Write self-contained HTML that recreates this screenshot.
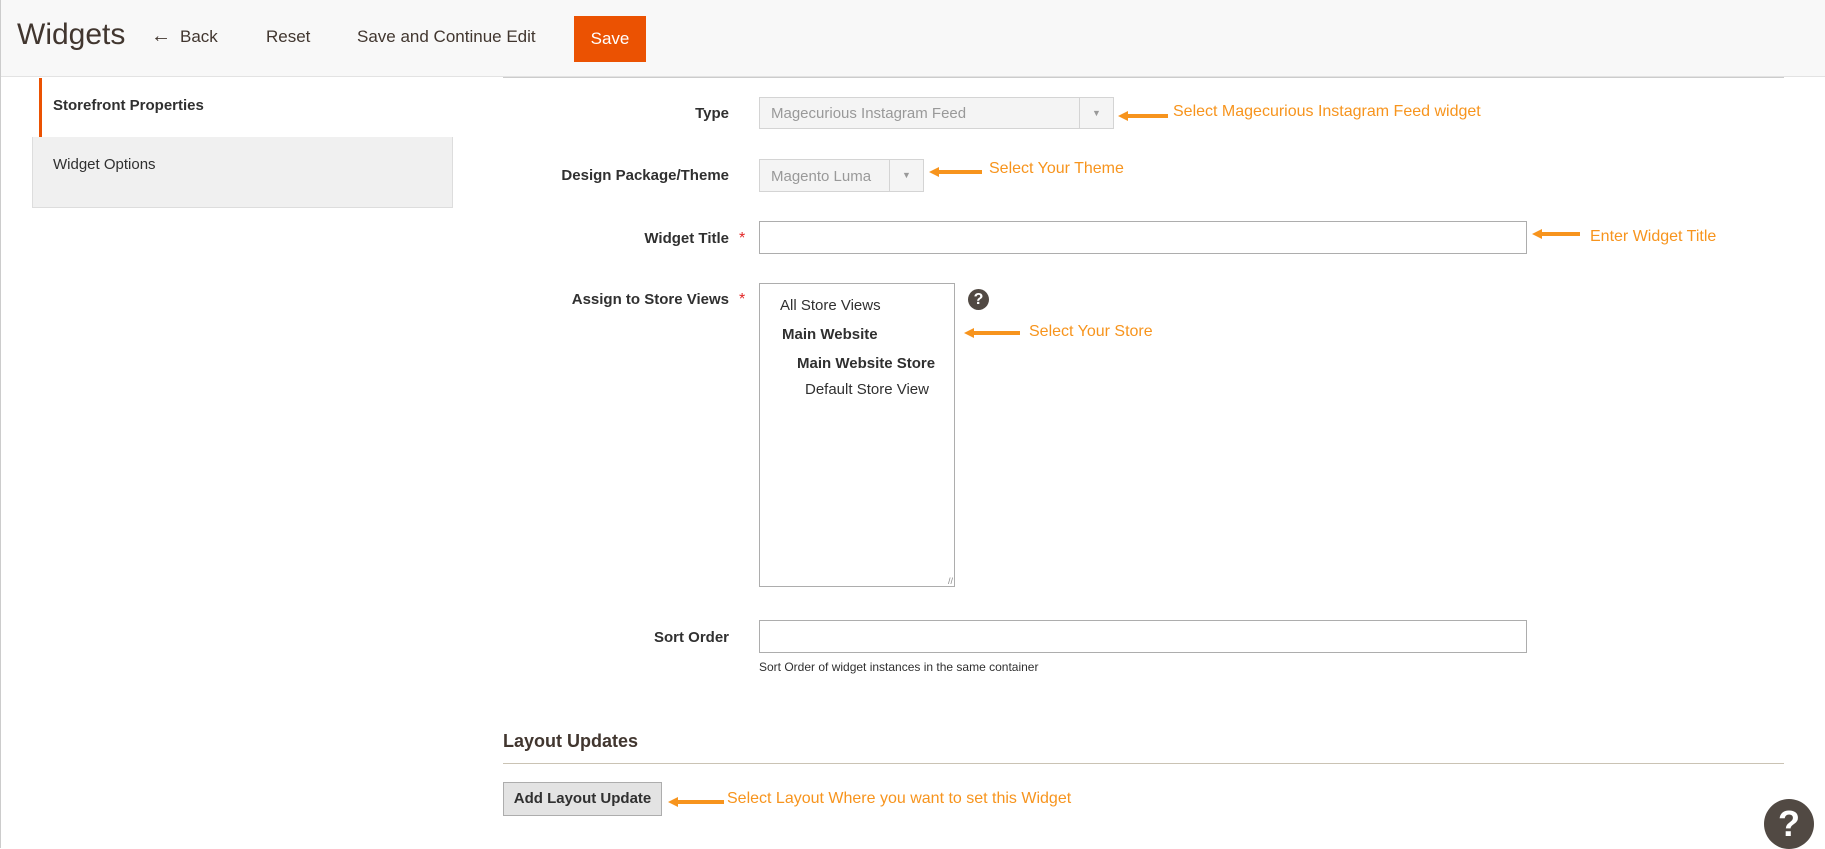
<!DOCTYPE html>
<html><head><meta charset="utf-8"><style>
*{box-sizing:border-box;margin:0;padding:0}
body{width:1825px;height:848px;overflow:hidden;background:#fff;font-family:"Liberation Sans",sans-serif;color:#303030;position:relative;border-left:1px solid #ccc}
.a{position:absolute;white-space:nowrap}
.hdr{left:0;top:0;width:1825px;height:77px;background:#f8f8f8;border-bottom:1px solid #e3e3e3}
.hb{font-size:17px;color:#41362f;top:27px}
.lbl{font-size:15px;font-weight:bold;color:#303030;text-align:right;width:400px}
.inp{border:1px solid #adadad;background:#fff}
.sel{border:1px solid #d4d4d4;background:#f4f4f4;color:#999;font-size:15px}
.or{color:#f7941d;font-size:16px}
.star{color:#e22626;font-size:16px}
</style></head><body>
<div class="a hdr"></div>
<div class="a" style="left:16px;top:18px;font-size:30px;color:#41362f">Widgets</div>
<div class="a hb" style="left:150px;top:25px;font-size:20px">&#8592;</div>
<div class="a hb" style="left:179px">Back</div>
<div class="a hb" style="left:265px">Reset</div>
<div class="a hb" style="left:356px">Save and Continue Edit</div>
<div class="a" style="left:573px;top:16px;width:72px;height:46px;background:#eb5202;color:#fff;font-size:17px;text-align:center;line-height:46px">Save</div>

<div class="a" style="left:38px;top:78px;width:414px;height:59px;border-left:3px solid #eb5202;background:#fff"></div>
<div class="a" style="left:52px;top:97px;font-size:15px;font-weight:bold">Storefront Properties</div>
<div class="a" style="left:31px;top:137px;width:421px;height:71px;background:#f0f0f0;border:1px solid #ddd;border-top:none"></div>
<div class="a" style="left:52px;top:156px;font-size:15px">Widget Options</div>

<div class="a" style="left:502px;top:77px;width:1281px;height:1px;background:#ccc"></div>

<div class="a lbl" style="left:328px;top:105px">Type</div>
<div class="a sel" style="left:758px;top:97px;width:355px;height:32px"><span style="position:absolute;left:11px;top:7px">Magecurious Instagram Feed</span><span style="position:absolute;right:0;top:0;width:34px;height:30px;border-left:1px solid #d4d4d4;font-size:9px;text-align:center;line-height:30px">&#9660;</span></div>
<div class="a" style="left:1117px;top:108px"><svg width="52" height="10"><path d="M0 5 L10 0 L10 3 L50 3 L50 7 L10 7 L10 10Z" fill="#f7941d"/></svg></div>
<div class="a or" style="left:1172px;top:103px">Select Magecurious Instagram Feed widget</div>

<div class="a lbl" style="left:328px;top:167px">Design Package/Theme</div>
<div class="a sel" style="left:758px;top:159px;width:165px;height:33px"><span style="position:absolute;left:11px;top:8px">Magento Luma</span><span style="position:absolute;right:0;top:0;width:34px;height:31px;border-left:1px solid #d4d4d4;font-size:9px;text-align:center;line-height:31px">&#9660;</span></div>
<div class="a" style="left:928px;top:164px"><svg width="55" height="10"><path d="M0 5 L10 0 L10 3 L53 3 L53 7 L10 7 L10 10Z" fill="#f7941d"/></svg></div>
<div class="a or" style="left:988px;top:160px">Select Your Theme</div>

<div class="a lbl" style="left:328px;top:230px">Widget Title</div>
<div class="a star" style="left:738px;top:230px">*</div>
<div class="a inp" style="left:758px;top:221px;width:768px;height:33px"></div>
<div class="a" style="left:1531px;top:226px"><svg width="50" height="10"><path d="M0 5 L10 0 L10 3 L48 3 L48 7 L10 7 L10 10Z" fill="#f7941d"/></svg></div>
<div class="a or" style="left:1589px;top:228px">Enter Widget Title</div>

<div class="a lbl" style="left:328px;top:291px">Assign to Store Views</div>
<div class="a star" style="left:738px;top:291px">*</div>
<div class="a inp" style="left:758px;top:283px;width:196px;height:304px;font-size:15px">
<div class="a" style="left:20px;top:13px">All Store Views</div>
<div class="a" style="left:22px;top:42px;font-weight:bold">Main Website</div>
<div class="a" style="left:37px;top:71px;font-weight:bold">Main Website Store</div>
<div class="a" style="left:45px;top:97px">Default Store View</div>
<div class="a" style="right:1px;bottom:0;font-size:9px;color:#888">//</div>
</div>
<div class="a" style="left:967px;top:289px;width:21px;height:21px;border-radius:50%;background:#514943;color:#fff;font-weight:bold;font-size:16px;text-align:center;line-height:21px">?</div>
<div class="a" style="left:963px;top:325px"><svg width="58" height="10"><path d="M0 5 L10 0 L10 3 L56 3 L56 7 L10 7 L10 10Z" fill="#f7941d"/></svg></div>
<div class="a or" style="left:1028px;top:323px">Select Your Store</div>

<div class="a lbl" style="left:328px;top:629px">Sort Order</div>
<div class="a inp" style="left:758px;top:620px;width:768px;height:33px"></div>
<div class="a" style="left:758px;top:660px;font-size:12px">Sort Order of widget instances in the same container</div>

<div class="a" style="left:502px;top:731px;font-size:18px;font-weight:bold;color:#41362f">Layout Updates</div>
<div class="a" style="left:502px;top:763px;width:1281px;height:1px;background:#cac3b4"></div>
<div class="a" style="left:502px;top:782px;width:159px;height:34px;background:#e3e3e3;border:1px solid #adadad;font-size:15px;font-weight:bold;text-align:center;line-height:32px">Add Layout Update</div>
<div class="a" style="left:667px;top:794px"><svg width="58" height="10"><path d="M0 5 L10 0 L10 3 L56 3 L56 7 L10 7 L10 10Z" fill="#f7941d"/></svg></div>
<div class="a or" style="left:726px;top:790px">Select Layout Where you want to set this Widget</div>

<div class="a" style="left:1763px;top:799px;width:50px;height:50px;border-radius:50%;background:#514943;color:#fff;font-weight:bold;font-size:36px;text-align:center;line-height:50px">?</div>
</body></html>
